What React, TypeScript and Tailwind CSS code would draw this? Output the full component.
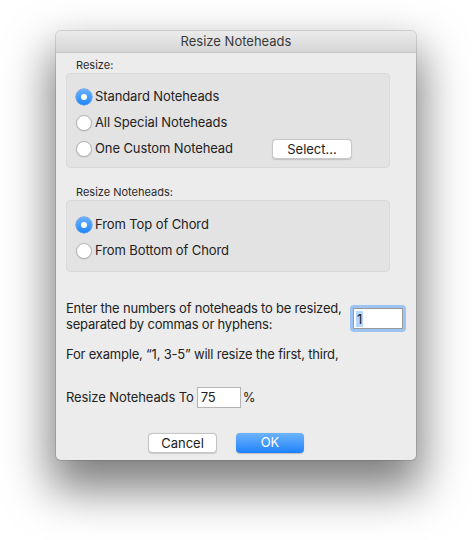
import React from "react";

const font = "font-['Inter','Liberation_Sans',sans-serif]";

const Radio = ({ checked, label }: { checked?: boolean; label: string }) => (
  <div className="flex h-[26px] items-center">
    {checked ? (
      <div className="flex h-[16px] w-[16px] items-center justify-center rounded-full bg-gradient-to-b from-[#68b1fa] to-[#1b85fb] shadow-[0_0_0_0.5px_#2f7de0]">
        <div className="h-[6px] w-[6px] rounded-full bg-white" />
      </div>
    ) : (
      <div className="h-[16px] w-[16px] rounded-full border border-[#b4b4b4] bg-white shadow-[0_0.5px_1px_rgba(0,0,0,0.15)]" />
    )}
    <span className="ml-[3px] text-[13px] tracking-[-0.1px] text-[#222]">{label}</span>
  </div>
);

const Group = ({ label, children, h }: { label: string; children: React.ReactNode; h: string }) => (
  <div className="flex flex-col">
    <div className="ml-[10px] h-[14px] text-[11px] leading-[14px] text-[#2a2a2a]">{label}</div>
    <div className={`mt-[1px] w-[324px] rounded-[4px] border border-[#dadada] bg-[#e3e3e3] pl-[9px] ${h}`}>
      {children}
    </div>
  </div>
);

export default function App() {
  return (
    <div className={`min-h-[540px] w-[472px] bg-white pl-[56px] pt-[31px] ${font}`}>
      <div className="flex h-[429px] w-[360px] flex-col overflow-hidden rounded-[5px] bg-[#ececec] shadow-[0_24px_45px_6px_rgba(0,0,0,0.5),0_0_0_1px_rgba(0,0,0,0.12)]">
        {/* Title bar */}
        <div className="flex h-[22px] items-center justify-center border-b border-[#c6c6c6] bg-gradient-to-b from-[#ebebeb] to-[#d6d6d6] text-[13px] text-[#3a3a3a]">
          Resize Noteheads
        </div>

        <div className="flex flex-col px-[10px] pt-[5px]">
          <Group label="Resize:" h="h-[95px] pt-[10px]">
            <Radio checked label="Standard Noteheads" />
            <Radio label="All Special Noteheads" />
            <div className="flex items-center justify-between pr-[37px]">
              <Radio label="One Custom Notehead" />
              <button className="h-[20px] w-[80px] rounded-[4px] border border-[#c8c8c8] bg-white text-[13px] text-[#222] shadow-[0_0.5px_1px_rgba(0,0,0,0.15)]">
                Select...
              </button>
            </div>
          </Group>

          <div className="mt-[17px]">
            <Group label="Resize Noteheads:" h="h-[72px] pt-[11px]">
              <Radio checked label="From Top of Chord" />
              <Radio label="From Bottom of Chord" />
            </Group>
          </div>

          <div className="mt-[28px] flex items-start justify-between whitespace-nowrap text-[13px] leading-[16px] tracking-[-0.2px] text-[#222]">
            <div>
              Enter the numbers of noteheads to be resized,
              <br />
              separated by commas or hyphens:
            </div>
            <div className="mt-[5px] rounded-[4px] bg-[#9cc3f2] p-[3px]">
              <div className="flex h-[21px] w-[50px] items-center border border-[#9a9a9a] bg-white pl-[2px]">
                <span className="bg-[#b3d7ff] px-[1px] text-[13px] leading-[16px] text-[#222]">1</span>
              </div>
            </div>
          </div>

          <div className="mt-[14px] whitespace-nowrap text-[13px] leading-[16px] tracking-[-0.2px] text-[#222]">
            For example, “1, 3-5” will resize the first, third,
          </div>

          <div className="mt-[25px] flex items-center text-[13px] tracking-[-0.1px] text-[#222]">
            <span>Resize Noteheads To</span>
            <div className="ml-[3px] flex h-[21px] w-[44px] items-center border border-[#b5b5b5] bg-white pl-[3px]">
              75
            </div>
            <span className="ml-[2px]">%</span>
          </div>

          <div className="mt-[25px] flex justify-center gap-[19px] pr-[20px]">
            <button className="h-[20px] w-[69px] rounded-[4px] border border-[#c4c4c4] bg-white text-[13px] text-[#222] shadow-[0_0.5px_1px_rgba(0,0,0,0.15)]">
              Cancel
            </button>
            <button className="h-[20px] w-[68px] rounded-[4px] bg-gradient-to-b from-[#6cb3fa] to-[#1a81fb] text-[13px] text-white shadow-[0_0.5px_1px_rgba(0,0,0,0.2)]">
              OK
            </button>
          </div>
        </div>
      </div>
    </div>
  );
}
